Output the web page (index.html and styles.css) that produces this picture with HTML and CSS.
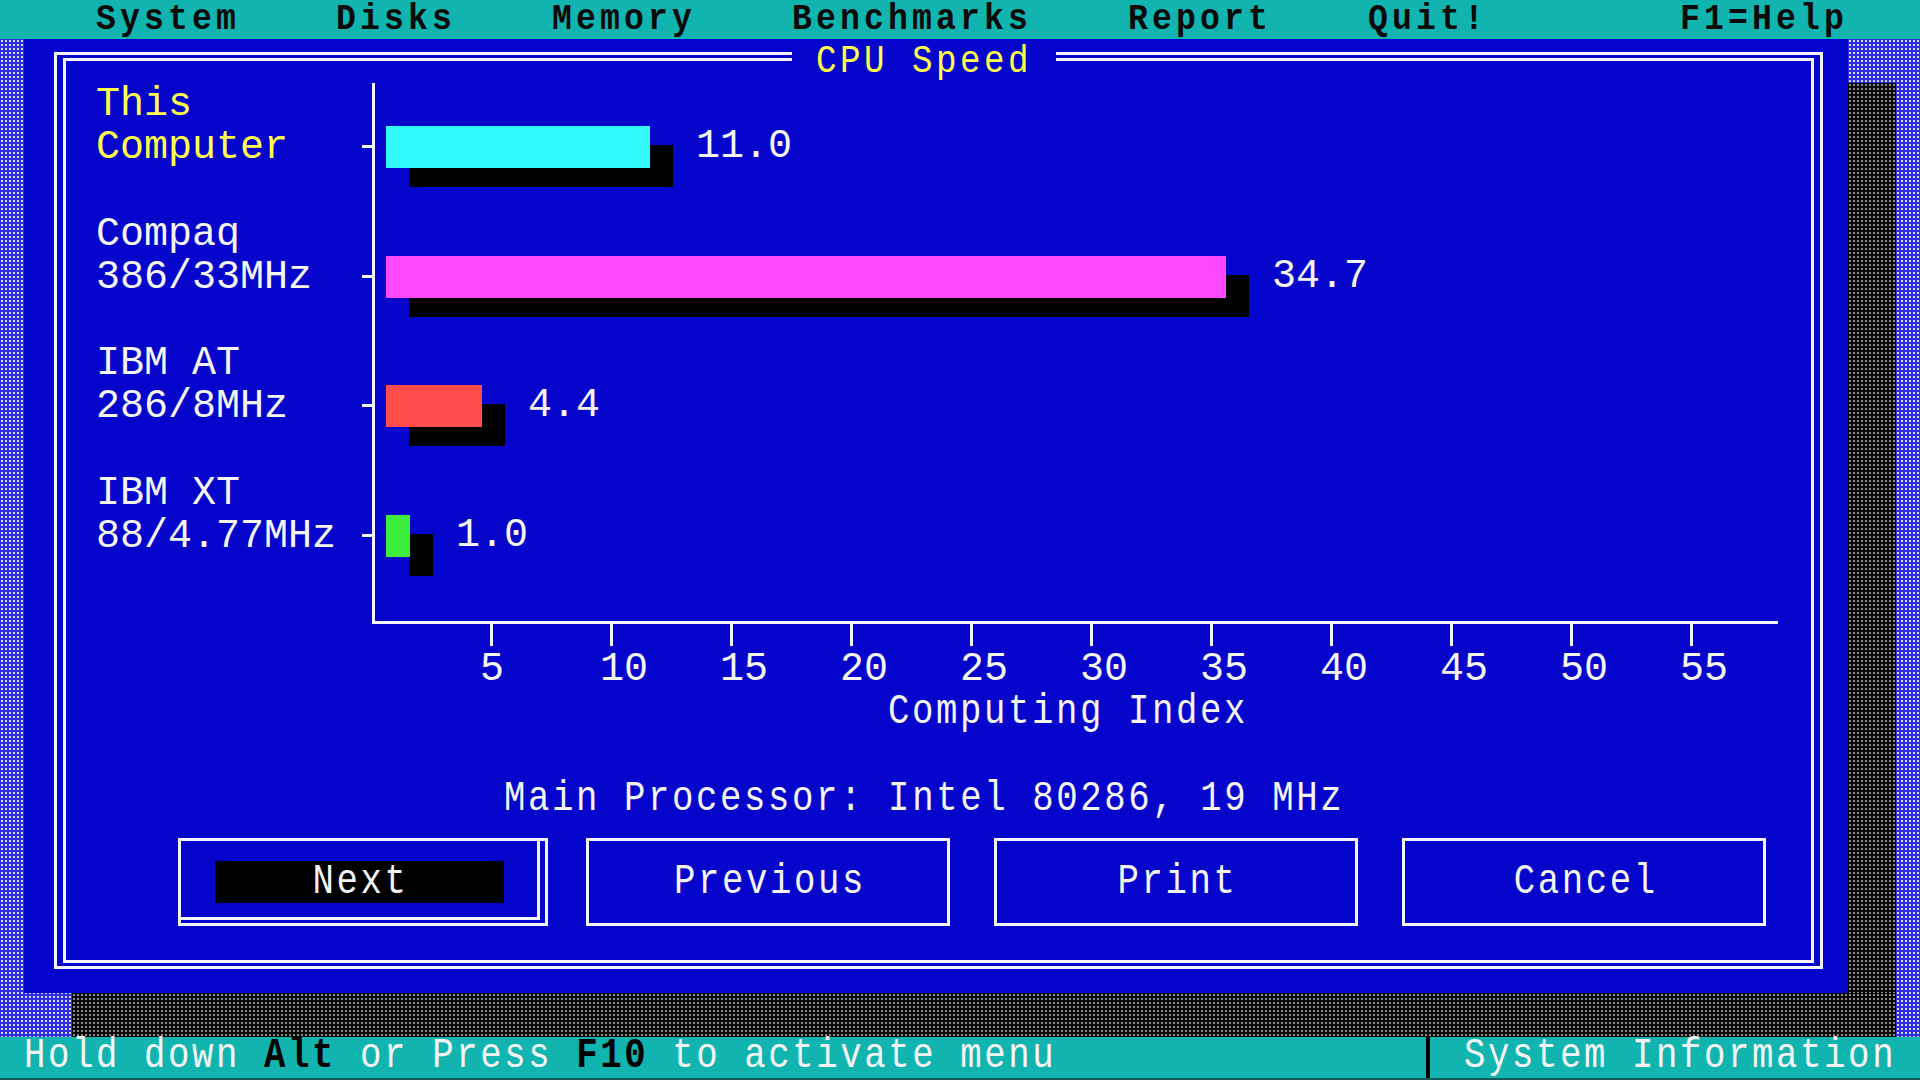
FILE: index.html
```html
<!DOCTYPE html>
<html lang="en">
<head>
<meta charset="utf-8">
<title>System Information - CPU Speed</title>
<link rel="stylesheet" href="styles.css">
</head>
<body>
<div class="screen">
  <nav class="menubar">
    <span class="nf menu m-system">System</span>
    <span class="nf menu m-disks">Disks</span>
    <span class="nf menu m-memory">Memory</span>
    <span class="nf menu m-bench">Benchmarks</span>
    <span class="nf menu m-report">Report</span>
    <span class="nf menu m-quit">Quit!</span>
    <span class="nf menu m-help">F1=Help</span>
  </nav>

  <main class="desk">
    <section class="dialog">
      <h1 class="title"><span class="nf title-text">CPU Speed</span></h1>
      <div class="frame">
        <div class="frame-inner">
          <div class="chart">
            <div class="labels">
              <div class="label sel">This<br>Computer</div>
              <div class="label">Compaq<br>386/33MHz</div>
              <div class="label">IBM AT<br>286/8MHz</div>
              <div class="label">IBM XT<br>88/4.77MHz</div>
            </div>
            <div class="yticks"><i></i><i></i><i></i><i></i></div>
            <div class="plot">
              <div class="series"><div class="series-row"><span class="bar cyan" style="width:264px"></span><span class="val">11.0</span></div></div>
              <div class="series"><div class="series-row"><span class="bar magenta" style="width:840px"></span><span class="val">34.7</span></div></div>
              <div class="series"><div class="series-row"><span class="bar red" style="width:96px"></span><span class="val">4.4</span></div></div>
              <div class="series"><div class="series-row"><span class="bar green" style="width:24px"></span><span class="val">1.0</span></div></div>
            </div>
          </div>
          <div class="xscale">
            <div class="xt"><span>5</span></div>
            <div class="xt"><span>10</span></div>
            <div class="xt"><span>15</span></div>
            <div class="xt"><span>20</span></div>
            <div class="xt"><span>25</span></div>
            <div class="xt"><span>30</span></div>
            <div class="xt"><span>35</span></div>
            <div class="xt"><span>40</span></div>
            <div class="xt"><span>45</span></div>
            <div class="xt"><span>50</span></div>
            <div class="xt"><span>55</span></div>
          </div>
          <div class="axis-title"><span class="nf">Computing Index</span></div>
          <div class="cpu"><span class="nf">Main Processor: Intel 80286, 19 MHz</span></div>
          <div class="buttons">
            <div class="btn btn-default"><div class="btn-face"><span class="btn-focus"><span class="nf nf-c">Next</span></span></div></div>
            <div class="btn"><span class="nf nf-c">Previous</span></div>
            <div class="btn"><span class="nf nf-c">Print</span></div>
            <div class="btn"><span class="nf nf-c">Cancel</span></div>
          </div>
        </div>
      </div>
    </section>
    <div class="shadow shadow-r"></div>
    <div class="shadow shadow-b"></div>
  </main>

  <footer class="statusbar">
    <span class="nf status-msg">Hold down <b>Alt</b> or Press <b>F10</b> to activate menu</span>
    <span class="divider"></span>
    <span class="nf status-app">System Information</span>
  </footer>
</div>
</body>
</html>
```

FILE: styles.css
```css
* { box-sizing: border-box; margin: 0; padding: 0; }

html, body {
  width: 1920px;
  height: 1080px;
  overflow: hidden;
}

body {
  font-family: "Liberation Mono", "DejaVu Sans Mono", monospace;
  font-size: 40px;
  line-height: 43.2px;
  color: #f4f4f4;
  background: #0505cc;
}

.screen {
  width: 1920px;
  height: 1080px;
  display: flex;
  flex-direction: column;
}

/* narrow screen font: tall condensed glyphs on 24px cells */
.nf {
  display: inline-block;
  vertical-align: top;
  font-size: 42px;
  letter-spacing: 3.04px;
  transform: scaleX(0.85);
  transform-origin: 0 50%;
  white-space: pre;
}
.nf-c { transform-origin: 50% 50%; margin-right: -3px; }

/* ---------- top menu ---------- */
.menubar {
  flex: none;
  height: 39px;
  display: grid;
  grid-template-columns: repeat(80, 24px);
  align-items: start;
  background: #12b4b0;
  color: #0a0a0a;
}
.menu {
  justify-self: start;
  font-size: 36px;
  font-weight: bold;
  letter-spacing: 4.49px;
  line-height: 40.8px;
  transform: scaleX(0.92);
}
.m-system { grid-column: 5 / span 6; }
.m-disks  { grid-column: 15 / span 5; }
.m-memory { grid-column: 24 / span 6; }
.m-bench  { grid-column: 34 / span 10; }
.m-report { grid-column: 48 / span 6; }
.m-quit   { grid-column: 58 / span 5; }
.m-help   { grid-column: 71 / span 7; }

/* ---------- desktop ---------- */
.desk {
  flex: 1;
  display: grid;
  grid-template-columns: 24px 1824px 48px 24px;
  grid-template-rows: 44px 910px 44px;
  background-color: #2a2ae0;
  background-image: radial-gradient(circle, #d4d4ff 0 1.1px, transparent 1.6px);
  background-size: 4px 4px;
}

.shadow {
  background-color: #0a0a0a;
  background-image: radial-gradient(circle, #8c8c8c 0 0.8px, transparent 1.3px);
  background-size: 4px 4px;
}
.shadow-r { grid-column: 3; grid-row: 2; }
.shadow-b { grid-column: 2 / 4; grid-row: 3; margin-left: 48px; }

/* ---------- dialog ---------- */
.dialog {
  grid-column: 2;
  grid-row: 1 / 3;
  position: relative;
  background: #0505cc;
  padding: 13px 25px 24px 30px;
}

.title {
  position: absolute;
  top: 0;
  left: 768px;
  width: 264px;
  height: 43.2px;
  padding-left: 24px;
  background: #0505cc;
  color: #ffff4c;
  font-size: 40px;
  font-weight: normal;
  line-height: 43.2px;
}
.title-text {
  font-size: 38px;
  letter-spacing: 3.87px;
  line-height: 46.8px;
  transform: scaleX(0.9);
}

.frame {
  height: 100%;
  border: 3px solid #f4f4ff;
  padding: 3px 6px;
}
.frame-inner {
  height: 100%;
  border: 3px solid #f4f4ff;
}

/* ---------- chart ---------- */
.chart {
  display: flex;
  margin-top: 22px;
  padding-left: 30px;
  height: 541px;
}

.labels { width: 266px; flex: none; }
.label { height: 129.6px; }
.label.sel { color: #ffff4c; }

.yticks { width: 10px; flex: none; padding-top: 62px; }
.yticks i {
  display: block;
  height: 3px;
  margin-bottom: 126.6px;
  background: #f4f4ff;
}

.plot {
  width: 1406px;
  flex: none;
  border-left: 3px solid #f4f4ff;
  border-bottom: 3px solid #f4f4ff;
  padding: 43px 0 0 11px;
}
.series { height: 129.6px; }
.series-row {
  display: flex;
  align-items: center;
  height: 42px;
}
.bar {
  display: block;
  height: 42px;
  box-shadow: 23px 19px 0 #000;
}
.cyan    { background: #33fafa; }
.magenta { background: #ff48ff; }
.red     { background: #ff4c4c; }
.green   { background: #3cee3c; }
.val { margin-left: 46px; line-height: 42px; }

.xscale {
  display: flex;
  margin-left: 414px;
}
.xt { width: 120px; flex: none; }
.xt::before {
  content: "";
  display: block;
  width: 3px;
  height: 22px;
  margin-left: 10px;
  background: #f4f4ff;
}
.xt span { display: block; margin-top: 2px; line-height: 43.2px; }

.axis-title { padding-left: 822px; height: 43.2px; line-height: 43.2px; }
.cpu { margin-top: 43.2px; padding-left: 438px; height: 43.2px; line-height: 43.2px; }

/* ---------- buttons ---------- */
.buttons {
  margin-top: 17.2px;
  padding-left: 112px;
  display: grid;
  grid-template-columns: repeat(4, 408px);
}
.btn {
  width: 364px;
  height: 88px;
  border: 3px solid #f4f4ff;
  display: flex;
  align-items: center;
  justify-content: center;
  line-height: 42px;
}
.btn-default {
  width: 370px;
  padding: 0 5px 3px 0;
  display: block;
}
.btn-default .btn-face {
  height: 100%;
  border-right: 3px solid #f4f4ff;
  border-bottom: 3px solid #f4f4ff;
  display: flex;
  align-items: center;
  justify-content: center;
  padding-top: 6px;
}
.btn-focus {
  width: 289px;
  height: 42px;
  background: #000;
  display: flex;
  justify-content: center;
  align-items: center;
}

/* ---------- status line ---------- */
.statusbar {
  flex: none;
  height: 43px;
  display: grid;
  grid-template-columns: repeat(80, 24px);
  background: #12b4b0;
  color: #f4f4f4;
  line-height: 38px;
  border-bottom: 2px solid #0c5c5a;
}
.status-msg { grid-column: 2 / span 43; justify-self: start; }
.status-msg b { color: #000; }
.divider {
  grid-column: 60;
  justify-self: center;
  width: 4px;
  background: #000;
}
.status-app { grid-column: 62 / span 18; justify-self: start; }
```
